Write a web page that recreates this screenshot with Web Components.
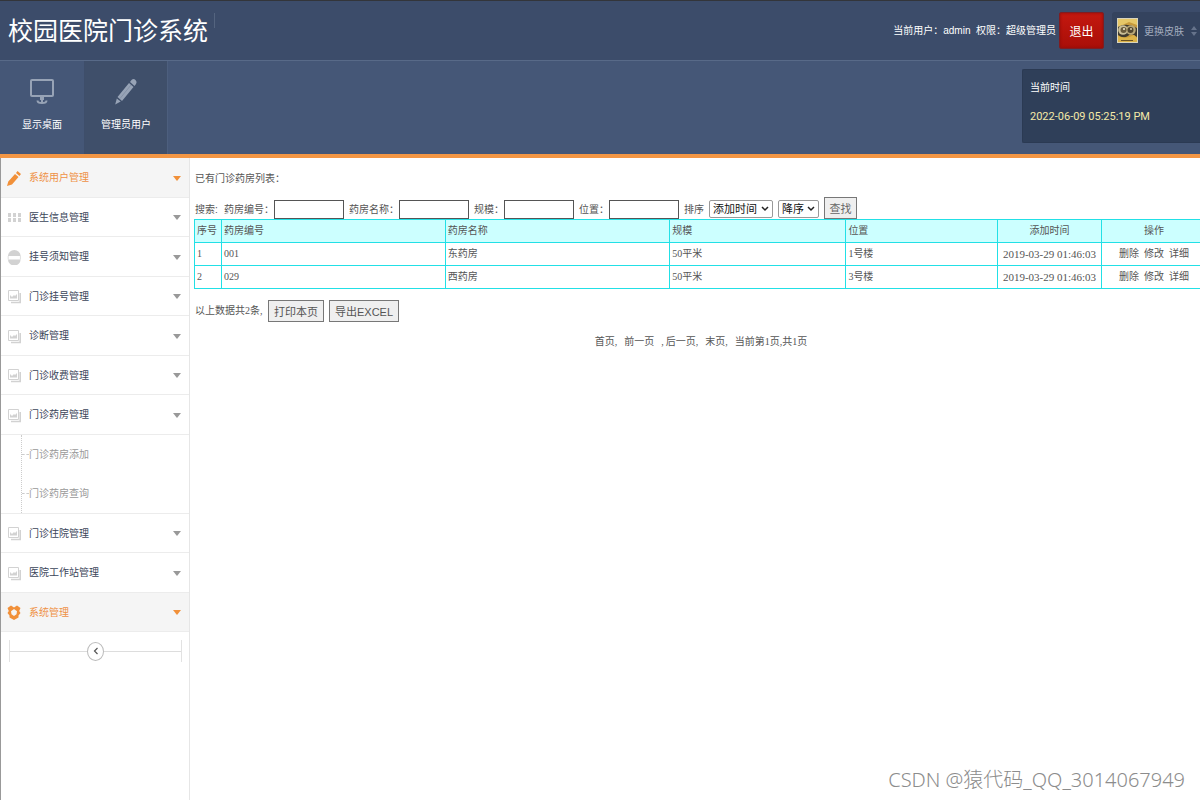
<!DOCTYPE html>
<html lang="zh-CN">
<head>
<meta charset="utf-8">
<title>校园医院门诊系统</title>
<style>
html,body{margin:0;height:100%}
body{font:10px/20px "Liberation Sans","Noto Sans CJK SC",sans-serif;color:#555;background:#fff}
</style>
</head>
<body>
<clinic-app></clinic-app>
<script>
const define=(name,html,init)=>{
  const t=document.createElement('template');
  t.innerHTML=html;
  customElements.define(name,class extends HTMLElement{
    constructor(){
      super();
      this.attachShadow({mode:'open'}).append(t.content.cloneNode(true));
      if(init)init.call(this,this.shadowRoot);
    }
  });
};

/* Top bar: title, signed-in user, log-out and skin chooser */
define('top-bar',`
<style>
:host{display:flex;align-items:center;height:61px;box-sizing:border-box;border-top:1px solid #33353a;border-bottom:1px solid #586a88;background:#3c4c6a;color:#fff;padding-left:8px}
h1{display:flex;gap:6px;margin:0;font-size:25px;line-height:36px;font-weight:400;white-space:nowrap;flex:1}
h1::after{content:"";height:15px;border-left:1px solid #54647f}
.user{margin-right:3px;white-space:pre}
.out{font:12px "Noto Sans CJK SC",sans-serif;width:45px;height:37px;border:1px solid #7f1d22;border-radius:2px;background:linear-gradient(#c4180f,#a90f08);color:#fff;padding:0;box-shadow:inset 0 0 3px #8a0e0a}
.skin{display:flex;align-items:center;gap:6px;width:88px;height:37px;box-sizing:border-box;padding:0 0 0 5px;margin-left:8px;border:0;border-radius:3px 0 0 3px;background:#34435e;color:#a3adbf;font:10px "Noto Sans CJK SC",sans-serif;white-space:nowrap;overflow:hidden}
svg{flex:none}
</style>
<h1>校园医院门诊系统</h1>
<span class="user">当前用户：admin  权限：超级管理员</span>
<button class="out">退出</button>
<button class="skin">
<svg width="21" height="25" viewBox="0 0 21 25"><rect width="21" height="25" fill="#d9d4bb"/><rect x="1" y="1" width="19" height="23" fill="#c79a3c"/><path d="M1 1h19v6L12 4 1 9z" fill="#e6c768"/><path d="M1 9q8-5 19 1v9q-6-5-9-1-5 3-10-1z" fill="#3f3a2f"/><circle cx="6" cy="12" r="4.800" fill="#cbbf97"/><circle cx="14" cy="12" r="4.800" fill="#b9a878"/><circle cx="6.500" cy="12" r="3" fill="#6a5b3c"/><circle cx="13.500" cy="12" r="3" fill="#51462f"/><circle cx="7" cy="11" r="1" fill="#f4ecd0"/><circle cx="14" cy="11" r="1" fill="#d8cda8"/><path d="M1 18q8 4 16-1l3 3v4H1z" fill="#dcb348"/><path d="M4 22h12v1H4z" fill="#6b5220"/></svg>
更换皮肤
<svg width="8" height="10" viewBox="0 0 8 10" fill="#66738b"><path d="M4 0l3 4H1zM4 10l3-4H1z"/></svg>
</button>`);

/* Shortcut strip with the clock panel */
define('nav-strip',`
<style>
:host{display:flex;align-items:flex-start;height:93px;background:#455777;border-bottom:4px solid #f39644}
nav{display:flex;flex:1;align-self:stretch}
</style>
<nav><slot></slot></nav><clock-panel></clock-panel>`);
define('nav-tile',`
<style>
:host{display:block;width:84px;box-sizing:border-box}
:host([active]){background:#3f4f6a;border-left:1px solid #3e4e6a;border-right:1px solid #4d5f7e}
a{display:flex;flex-direction:column;align-items:center;color:#fff;text-decoration:none;padding-top:16px;gap:8px}
</style>
<a href="#"><svg width="28" height="30" viewBox="0 0 28 30"></svg><slot></slot></a>`,function(r){
  const shapes={
    screen:'<g fill="none" stroke="#97a3b6" stroke-width="2"><rect x="3" y="3" width="22" height="16" rx="1"/><path d="M14 20v5M9.500 23.500q0 2.500 4.500 2.500t4.500-2.500"/></g><path d="M12 20h4v3h-4z" fill="#97a3b6"/>',
    pencil:'<path d="M19.500 3q2-2 4 0t.5 4l-1.500 2-4.500-4zM17 6l4.500 4L10 24l-4.500-4zM4.800 21.500l3.900 3-5.500 3z" fill="#97a3b6"/><path d="M19 8L8 21.500" stroke="#8592a7"/>'};
  r.querySelector('svg').innerHTML=shapes[this.getAttribute('icon')]||shapes.screen;
});
define('clock-panel',`
<style>
:host{display:block;width:178px;height:74px;box-sizing:border-box;margin-top:8px;padding:8px 0 8px 7px;background:#2f3f59;border-radius:2px 0 0 2px;color:#fff;border:1px solid #2b3a53;border-right:0}
p,time{display:block;margin:0;line-height:20px}
time{margin-top:9px;font-family:Roboto,sans-serif;font-size:11px;color:#f5eaa8}
</style>
<p>当前时间</p><time datetime="2022-06-09T17:25:19">2022-06-09 05:25:19 PM</time>`);

/* Side menu */
const icons={
  pencil:'<path d="M10.500 0l3.500 3-1.600 2L9 2zM8 3l3.500 3L5 13.500 0 15l1.300-4.500z"/>',
  grid:'<path d="M1 3h3v4H1zM6 3h3v4H6zM11 3h3v4h-3zM1 8h3v4H1zM6 8h3v4H6zM11 8h3v4h-3z"/>',
  minus:'<path d="M1 6a6.300 6 0 0 1 12.600 0zM1 9.500a6.300 6 0 0 0 12.600 0z"/><path d="M1.200 6v3.500M13.400 6v3.500" stroke="currentColor" stroke-width=".7"/>',
  image:'<path d="M1.500 1.500h10v10h-10z" fill="none" stroke="currentColor"/><path d="M13.200 4v9.500H4" fill="none" stroke="currentColor" stroke-width="1.600"/><path d="M3 9.500V6l2 2 2-2 1 1 2-2v4.500z"/>',
  gear:'<path d="M4 .5L7 2.500l3-2 3.500 2.500-1.300 3L13.500 8l-2 2.500v2L7 15l-4.500-2.500v-2L.5 8l1.300-2L.5 3zM7 4L4 6.200l.5 3L7 11l2.500-1.800.5-3z" fill-rule="evenodd"/>'};
define('menu-item',`
<style>
:host{display:block;box-sizing:border-box;height:40px;border-bottom:1px solid #ececec;color:#3b4559}
:host(:nth-of-type(even)){height:39px}
:host([active]){background:#f5f5f5;color:#ef9145}
a{display:flex;align-items:center;height:100%;padding:1px 8px 0 6px;box-sizing:border-box;color:inherit;text-decoration:none}
.icon{width:15px;height:15px;margin-right:7px;color:#d2d2d2}
.caret{color:#999}
:host([active]) .icon,:host([active]) .caret{color:#f19039}
slot{display:block;flex:1}
</style>
<a href="#"><svg class="icon" viewBox="0 0 15 15" fill="currentColor"></svg><slot></slot><svg class="caret" width="8" height="5" viewBox="0 0 8 5" fill="currentColor"><path d="M0 0h8L4 5z"/></svg></a>`,function(r){
  r.querySelector('.icon').innerHTML=icons[this.getAttribute('icon')]||icons.image;
});
define('sub-menu',`
<style>
:host{display:block;border-bottom:1px solid #ececec}
ul{list-style:none;margin:0 0 0 20px;padding:0;border-left:1px dotted #ccc}
li{height:39px;display:flex;align-items:center}
li::before{content:"";width:7px;border-top:1px dashed #ccc}
a{color:#999;text-decoration:none}
</style>
<ul><li><a href="#">门诊药房添加</a></li><li><a href="#">门诊药房查询</a></li></ul>`);
define('menu-collapse',`
<style>
:host{display:flex;align-items:center;height:22px;margin:8px 7px 8px 8px;border:solid #e2e2e2;border-width:0 1px}
:host::before,:host::after{content:"";flex:1;border-top:1px solid #ddd}
button{display:flex;align-items:center;justify-content:center;width:17px;height:19px;padding:0;border:1px solid #bbb;border-radius:50%;background:#fff}
</style>
<button aria-label="收起菜单"><svg width="6" height="8" viewBox="0 0 6 8" fill="none" stroke="#555" stroke-width="1.200"><path d="M4.500 1L1.500 4l3 3"/></svg></button>`);
define('side-menu',`
<style>:host{display:block;width:190px;flex:none;box-sizing:border-box;border-left:1px solid #999;border-right:1px solid #e6e6e6}</style>
<menu-item icon="pencil" active>系统用户管理</menu-item>
<menu-item icon="grid">医生信息管理</menu-item>
<menu-item icon="minus">挂号须知管理</menu-item>
<menu-item icon="image">门诊挂号管理</menu-item>
<menu-item icon="image">诊断管理</menu-item>
<menu-item icon="image">门诊收费管理</menu-item>
<menu-item icon="image">门诊药房管理</menu-item>
<sub-menu></sub-menu>
<menu-item icon="image">门诊住院管理</menu-item>
<menu-item icon="image">医院工作站管理</menu-item>
<menu-item icon="gear" active>系统管理</menu-item>
<menu-collapse></menu-collapse>`);

/* Search form */
define('search-form',`
<style>
:host{display:block;padding-left:1px}
form{display:flex;align-items:flex-end;gap:5px;white-space:nowrap}
.lead{width:24px}
.lead,label{line-height:18px;display:flex;align-items:flex-end}
input{width:70px;height:19px;box-sizing:border-box;border:1px solid #555;background:#fff;padding:0 2px}
.sel{gap:5px}
select{font:11px "Liberation Sans","Noto Sans CJK SC",sans-serif;color:#111;height:18px;margin:0 0 1px;border:1px solid #999;border-radius:2px;padding:0 3px;background:#fff url('data:image/svg+xml,<svg xmlns="http://www.w3.org/2000/svg" width="8" height="6" fill="none" stroke="%23222" stroke-width="1.500"><path d="M1 1l3 3 3-3"/></svg>') no-repeat right 3px center;appearance:none}
.by{width:64px}.dir{width:41px}
button{font:11px "Liberation Sans","Noto Sans CJK SC",sans-serif;width:33px;height:22px;padding:0;border:1px solid #777;background:#efefef;color:#666}
</style>
<form onsubmit="return false">
<span class="lead">搜索:</span>
<label>药房编号：<input></label><label>药房名称：<input></label><label>规模：<input></label><label>位置：<input></label>
<label class="sel">排序<select class="by"><option>添加时间</option></select></label>
<select class="dir" aria-label="顺序"><option>降序</option></select>
<button>查找</button>
</form>`);

/* Pharmacy table */
define('pharmacy-table',`
<style>
:host{display:block}
table{table-layout:fixed;border-collapse:collapse;width:calc(100% + 7px);font-family:"Liberation Serif","Noto Sans CJK SC",serif;border:1px solid #22e0e6}
th,td{border:1px solid #22e0e6;height:22px;padding:0 2px;line-height:20px;text-align:left;font-weight:400;box-sizing:border-box;white-space:nowrap}
tr{height:23px}
thead{background:#cff}
.no{width:27px}.code{width:22.100%}.name{width:22.200%}.size{width:17.400%}.time{width:104px}.ops{width:105px}
th:nth-child(n+6),td:nth-child(n+6){text-align:center}
td:nth-child(6){font-size:11px}
.links{display:flex;justify-content:center;gap:5px}
a{color:inherit;text-decoration:none}
</style>
<table>
<colgroup><col class="no"><col class="code"><col class="name"><col class="size"><col><col class="time"><col class="ops"></colgroup>
<thead><tr><th>序号</th><th>药房编号</th><th>药房名称</th><th>规模</th><th>位置</th><th>添加时间</th><th>操作</th></tr></thead>
<tbody></tbody>
</table>`,function(r){
  const rows=[['1','001','东药房','50平米','1号楼'],['2','029','西药房','50平米','3号楼']];
  r.querySelector('tbody').innerHTML=rows.map(c=>'<tr>'+[...c,'2019-03-29 01:46:03'].map(v=>`<td>${v}</td>`).join('')+
    '<td><div class="links"><a href="#">删除</a><a href="#">修改</a><a href="#">详细</a></div></td></tr>').join('');
});
define('table-actions',`
<style>
:host{display:flex;align-items:center;gap:5px;margin-top:11px;padding-left:1px;font-family:"Liberation Serif","Noto Sans CJK SC",serif}
span{width:68px}
button{font:11px "Liberation Sans","Noto Sans CJK SC",sans-serif;height:22px;padding:0 5px;border:1px solid #777;background:#efefef;color:#555}
</style>
<span>以上数据共2条,</span><button>打印本页</button><button>导出EXCEL</button>`);
define('page-links',`
<style>
:host{display:flex;justify-content:center;gap:7px;margin-top:10px;padding-left:8px;font-family:"Liberation Serif","Noto Sans CJK SC",serif}
a{color:inherit;text-decoration:none}
i{font-style:normal;padding-right:2px}
</style>
<span><a href="#">首页</a>,</span><a href="#">前一页</a><span><i>,</i><a href="#">后一页</a>,</span><span><a href="#">末页</a>,</span><span>当前第1页,共1页</span>`);
define('pharmacy-page',`
<style>
:host{display:block;flex:1;min-width:0;overflow:hidden;padding:11px 0 0 4px;box-sizing:border-box}
p{margin:0 0 8px;padding-left:1px}
</style>
<p>已有门诊药房列表：</p>
<search-form></search-form><pharmacy-table></pharmacy-table><table-actions></table-actions><page-links></page-links>`);

define('clinic-app',`
<style>
:host{display:flex;flex-direction:column;min-height:100%;position:relative}
main{display:flex;flex:1}
.mark{position:absolute;right:15px;bottom:6px;font:20px/28px "Noto Sans","Noto Sans CJK SC",sans-serif;font-weight:300;color:#8c8c8c}
</style>
<top-bar></top-bar>
<nav-strip><nav-tile icon="screen">显示桌面</nav-tile><nav-tile icon="pencil" active>管理员用户</nav-tile></nav-strip>
<main><side-menu></side-menu><pharmacy-page></pharmacy-page></main>
<div class="mark">CSDN @猿代码_QQ_3014067949</div>`);
</script>
</body>
</html>
